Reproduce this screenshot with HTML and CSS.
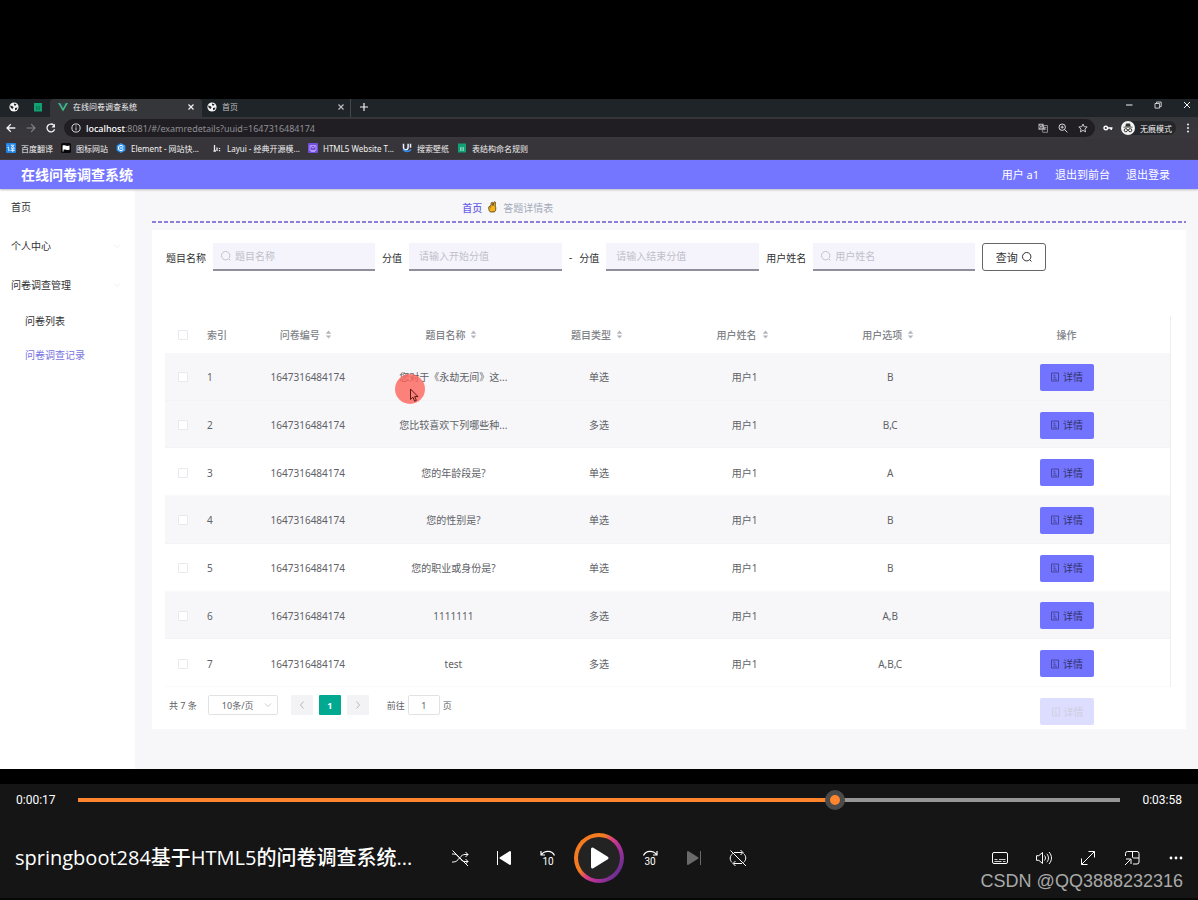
FILE: index.html
```html
<!DOCTYPE html>
<html lang="zh-CN">
<head>
<meta charset="utf-8">
<title>在线问卷调查系统</title>
<link rel="stylesheet" href="styles.css">
</head>
<body>
<svg class="defs" aria-hidden="true">
  <symbol id="globe" viewBox="0 0 10 10"><circle cx="5" cy="5" r="4.6" fill="#f4f4f4"/><path d="M1 3.500 3.800 4.200 4.600 5.600 3.400 7 1.800 5.800ZM5 1.400 7.600 2.200 6.400 3.800 5 3.200ZM6 6 8.600 5.600 7.600 7.800 6 8.200Z" fill="#24272a"/></symbol>
  <symbol id="close" viewBox="0 0 8 8"><path d="M1.500 1.500l5 5M6.500 1.500l-5 5" stroke="currentColor" stroke-width="1.200"/></symbol>
  <symbol id="search" viewBox="0 0 12 12"><circle cx="5.700" cy="5.700" r="4.200" fill="none" stroke="currentColor"/><path d="M8.800 8.800l1.700 1.700" stroke="currentColor"/></symbol>
  <symbol id="sort" viewBox="0 0 8 10"><path d="M4 0.500 7.200 4H.8ZM4 9.500 7.200 6H.8Z" fill="#b4b6bc"/></symbol>
  <symbol id="doc" viewBox="0 0 10 10"><path d="M1.500 1h7v8h-7zM3.300 3.200h2M3.300 5.200h2.500M3.300 7.200h3.500" fill="none" stroke="currentColor" stroke-width=".7"/></symbol>
  <symbol id="chev" viewBox="0 0 8 8"><path d="M1 2.500 4 5.500 7 2.500" fill="none" stroke="currentColor" stroke-width=".9"/></symbol>
</svg>

<section class="video">
  <div class="browser">
    <div class="tabs">
      <div class="pins">
        <svg class="i10"><use href="#globe"/></svg>
        <svg class="i10" viewBox="0 0 10 10"><path d="M1 1h8v8.500H1z" fill="#12a172"/><path d="M3 5h1.600M5.400 5H7M3 7h1.600M5.400 7H7" stroke="#0a5c44"/></svg>
      </div>
      <div class="tab active">
        <svg class="i10" viewBox="0 0 10 10"><path d="M0 1h2.200L5 6 7.800 1H10L5 9.500Z" fill="#41b883"/><path d="M2.200 1h1.600L5 3.200 6.200 1h1.600L5 6Z" fill="#35495e"/></svg>
        <span>在线问卷调查系统</span>
        <button class="bare" aria-label="关闭"><svg class="i8"><use href="#close"/></svg></button>
      </div>
      <div class="tab">
        <svg class="i10"><use href="#globe"/></svg>
        <span>首页</span>
        <button class="bare" aria-label="关闭"><svg class="i8"><use href="#close"/></svg></button>
      </div>
      <button class="bare newtab" aria-label="新标签页"><svg class="i10" viewBox="0 0 10 10"><path d="M5 1v8M1 5h8" stroke="currentColor" stroke-width="1.200"/></svg></button>
      <div class="winctl">
        <button class="bare" aria-label="最小化"><svg class="i8" viewBox="0 0 8 8"><path d="M1 4h6.500" stroke="currentColor"/></svg></button>
        <button class="bare" aria-label="还原"><svg class="i8" viewBox="0 0 8 8"><path d="M1 2.500h4.600v4.600H1zM2.600 2.500V1h4.600v4.600H5.600" fill="none" stroke="currentColor" stroke-width=".8"/></svg></button>
        <button class="bare" aria-label="关闭窗口"><svg class="i8" viewBox="0 0 8 8"><path d="M1 1l6 6M7 1l-6 6" stroke="currentColor"/></svg></button>
      </div>
    </div>
    <div class="toolbar">
      <button class="bare" aria-label="后退"><svg class="i10" viewBox="0 0 10 10"><path d="M9.300 5H1.200M4.800 1.200 1 5l3.800 3.800" fill="none" stroke="currentColor" stroke-width="1.300"/></svg></button>
      <button class="bare dim" aria-label="前进"><svg class="i10" viewBox="0 0 10 10"><path d="M.7 5h8.100M5.200 1.200 9 5 5.200 8.800" fill="none" stroke="currentColor" stroke-width="1.100"/></svg></button>
      <button class="bare" aria-label="刷新"><svg class="i10" viewBox="0 0 10 10"><path d="M8.600 6.200A3.900 3.900 0 1 1 7.800 2.300" fill="none" stroke="currentColor" stroke-width="1.300"/><path d="M9 .8v3.600H5.400z" fill="currentColor"/></svg></button>
      <div class="address">
        <svg class="i10" viewBox="0 0 10 10"><circle cx="5" cy="5" r="4.100" fill="none" stroke="currentColor"/><path d="M5 4.400v3M5 2.400v1.100" stroke="currentColor"/></svg>
        <span class="url"><b>localhost</b>:8081/#/examredetails?uuid=1647316484174</span>
        <svg class="i10" viewBox="0 0 10 10"><path d="M.5.8h5l1.200 6H.5z" fill="#b5b5b8"/><path d="M5.500 2.500h4v6.800H4.800L4.200 7M6 4.400h2.600M7.400 4.400 6.200 7.200M6.400 5l2 2" fill="none" stroke="#b5b5b8" stroke-width=".7"/><path d="M4.200 2.800A1.500 1.500 0 1 0 4.400 4.200H3" fill="none" stroke="#222" stroke-width=".7"/></svg>
        <svg class="i10" viewBox="0 0 10 10"><circle cx="4.200" cy="4.200" r="3.200" fill="none" stroke="currentColor"/><path d="M6.600 6.600l2.800 2.800M2.700 4.200h3M4.200 2.700v3" stroke="currentColor"/></svg>
        <svg class="i10" viewBox="0 0 10 10"><path d="M5 1l1.200 2.700 3 .3-2.300 2 .7 2.900L5 7.400 2.400 8.900 3.100 6 .8 4l3-.3Z" fill="none" stroke="currentColor" stroke-width=".9"/></svg>
      </div>
      <svg class="i10" viewBox="0 0 10 10"><circle cx="2.800" cy="5" r="1.800" fill="none" stroke="#fff" stroke-width="1.400"/><path d="M4.500 5h5M8.200 5v2" stroke="#fff" stroke-width="1.400"/></svg>
      <div class="incognito">
        <svg class="i14" viewBox="0 0 14 14"><circle cx="7" cy="7" r="7" fill="#f4f4f4"/><path d="M4.300 5.600 5 2.600h4l.7 3ZM2.400 5.700h9.200v.9H2.400z" fill="#333"/><circle cx="4.800" cy="9.200" r="1.600" fill="none" stroke="#333"/><circle cx="9.200" cy="9.200" r="1.600" fill="none" stroke="#333"/><path d="M6.300 9h1.400" stroke="#333"/></svg>
        <span>无痕模式</span>
      </div>
      <button class="bare" aria-label="菜单"><svg class="i10" viewBox="0 0 10 10"><g fill="currentColor"><circle cx="5" cy="1.600" r="1"/><circle cx="5" cy="5" r="1"/><circle cx="5" cy="8.400" r="1"/></g></svg></button>
    </div>
    <nav class="bookmarks">
      <a href="#"><svg class="i10" viewBox="0 0 10 10"><rect width="10" height="10" rx="1" fill="#2083e8"/><path d="M1.600 2.300l1 .8M1.300 4.400h1.400v3.400l1-.8M4.600 2.200h3.600L5 5M5.200 2.600 8.600 5M4.800 5.800h3.800M4.400 7.400h4.400M6.700 4.800v4.400" fill="none" stroke="#fff" stroke-width=".8"/></svg>百度翻译</a>
      <a href="#"><svg class="i10" viewBox="0 0 10 10"><rect width="10" height="10" rx="1.500" fill="#080808"/><path d="M1.600 2.600c2-1 3.200 1 6.900 0v4.200c-3 1-4-.8-6 0v1.600h-.9z" fill="#fff"/></svg>图标网站</a>
      <a href="#"><svg class="i10" viewBox="0 0 10 10"><path d="M5 0 9.300 2.500v5L5 10 .7 7.500v-5z" fill="#3398f5"/><path d="M7.400 3.600 5 2.300 2.600 3.600v2.900L5 7.800 7.400 6.500M4 5h3" fill="none" stroke="#fff" stroke-width="1"/></svg>Element - 网站快...</a>
      <a href="#" class="wide"><svg class="i10" viewBox="0 0 10 10"><path d="M2.500 2v6M1.500 8h2.500M5 8V4.500M7.500 5v1M7.500 7v1.300" fill="none" stroke="#ececec" stroke-width="1.300"/></svg>Layui - 经典开源模...</a>
      <a href="#"><svg class="i10" viewBox="0 0 10 10"><rect width="10" height="10" rx="1" fill="#7350dc"/><path d="M2 2.500h6v5H2zM2 2.500l3 2.500 3-2.500M3 8.500h4" fill="none" stroke="#b9a2ff" stroke-width=".9"/></svg>HTML5 Website T...</a>
      <a href="#"><svg class="i10" viewBox="0 0 10 10"><path d="M1.500.8v3.700a2.300 2.300 0 0 0 4.600 0V.8M8.500.8v4" fill="none" stroke="#e8f1ff" stroke-width="1.500"/><path d="M1 6.500c2 2.600 6 2.600 8 0" fill="none" stroke="#3088ef" stroke-width="1.600"/></svg>搜索壁纸</a>
      <a href="#"><svg class="i10" viewBox="0 0 10 10"><path d="M1 .5h8v9H1z" fill="#12a172"/><path d="M3 5h1.600M5.400 5H7M3 7h1.600M5.400 7H7" stroke="#dff"/></svg>表结构命名规则</a>
    </nav>

    <div class="app">
      <header class="apphead">
        <h1>在线问卷调查系统</h1>
        <span>用户 a1</span><a href="#">退出到前台</a><a href="#">退出登录</a>
      </header>
      <div class="body">
        <nav class="side">
          <a href="#">首页</a>
          <a href="#">个人中心<svg class="i8"><use href="#chev"/></svg></a>
          <a href="#">问卷调查管理<svg class="i8"><use href="#chev"/></svg></a>
          <a href="#" class="sub">问卷列表</a>
          <a href="#" class="sub on">问卷调查记录</a>
        </nav>
        <main>
          <div class="crumbs"><a href="#">首页</a>
            <svg class="hand" viewBox="0 0 10 13"><path d="M2.600 12C.8 10.500.5 8.200 1 6.200L3.200 5 3.600 2.200C3.900.9 5.300 1 5.200 2.400L5.500 5 6.500 1.300C7 .2 8.500.5 8.200 2L8 5.500C9.200 7 8.800 11 7 12Z" fill="#f3b51b" stroke="#4c3508" stroke-width=".9"/><path d="M3.200 5.200 2.800 8" stroke="#8b5b08" stroke-width=".7"/></svg>
            <span>答题详情表</span></div>
          <div class="card">
            <form class="filters">
              <label for="q1">题目名称</label>
              <div class="field long"><svg class="i12"><use href="#search"/></svg><input id="q1" placeholder="题目名称"></div>
              <label for="q2">分值</label>
              <div class="field"><input id="q2" placeholder="请输入开始分值"></div>
              <span class="dash">-</span>
              <label for="q3">分值</label>
              <div class="field"><input id="q3" placeholder="请输入结束分值"></div>
              <label for="q4">用户姓名</label>
              <div class="field long"><svg class="i12"><use href="#search"/></svg><input id="q4" placeholder="用户姓名"></div>
              <button type="button" class="query">查询<svg class="i12"><use href="#search"/></svg></button>
            </form>
            <table>
              <colgroup><col class="c-narrow"><col class="c-narrow"><col><col><col><col><col><col class="c-act"></colgroup>
              <thead><tr>
                <th><input type="checkbox" aria-label="全选"></th><th class="idx">索引</th>
                <th><span class="sort">问卷编号<svg><use href="#sort"/></svg></span></th>
                <th><span class="sort">题目名称<svg><use href="#sort"/></svg></span></th>
                <th><span class="sort">题目类型<svg><use href="#sort"/></svg></span></th>
                <th><span class="sort">用户姓名<svg><use href="#sort"/></svg></span></th>
                <th><span class="sort">用户选项<svg><use href="#sort"/></svg></span></th>
                <th>操作</th>
              </tr></thead>
              <tbody>
                <tr class="tint"><td><input type="checkbox" aria-label="选择 1"></td><td class="idx">1</td><td>1647316484174</td><td class="pointed">您对于《永劫无间》这...<svg class="pointer" viewBox="0 0 30 30"><circle cx="15" cy="15" r="15" fill="#ff5a50" fill-opacity=".75"/><path d="M15.500 15v10.500l2.400-2.300 1.700 4 1.800-.8-1.700-3.800h3.300Z" fill="#f88078" stroke="#5a1714"/></svg></td><td>单选</td><td>用户1</td><td>B</td><td><button class="detail"><svg class="i10"><use href="#doc"/></svg>详情</button></td></tr>
                <tr class="tint"><td><input type="checkbox" aria-label="选择 2"></td><td class="idx">2</td><td>1647316484174</td><td>您比较喜欢下列哪些种...</td><td>多选</td><td>用户1</td><td>B,C</td><td><button class="detail"><svg class="i10"><use href="#doc"/></svg>详情</button></td></tr>
                <tr><td><input type="checkbox" aria-label="选择 3"></td><td class="idx">3</td><td>1647316484174</td><td>您的年龄段是?</td><td>单选</td><td>用户1</td><td>A</td><td><button class="detail"><svg class="i10"><use href="#doc"/></svg>详情</button></td></tr>
                <tr class="tint"><td><input type="checkbox" aria-label="选择 4"></td><td class="idx">4</td><td>1647316484174</td><td>您的性别是?</td><td>单选</td><td>用户1</td><td>B</td><td><button class="detail"><svg class="i10"><use href="#doc"/></svg>详情</button></td></tr>
                <tr><td><input type="checkbox" aria-label="选择 5"></td><td class="idx">5</td><td>1647316484174</td><td>您的职业或身份是?</td><td>单选</td><td>用户1</td><td>B</td><td><button class="detail"><svg class="i10"><use href="#doc"/></svg>详情</button></td></tr>
                <tr class="tint"><td><input type="checkbox" aria-label="选择 6"></td><td class="idx">6</td><td>1647316484174</td><td>1111111</td><td>多选</td><td>用户1</td><td>A,B</td><td><button class="detail"><svg class="i10"><use href="#doc"/></svg>详情</button></td></tr>
                <tr><td><input type="checkbox" aria-label="选择 7"></td><td class="idx">7</td><td>1647316484174</td><td>test</td><td>多选</td><td>用户1</td><td>A,B,C</td><td><button class="detail"><svg class="i10"><use href="#doc"/></svg>详情</button></td></tr>
              </tbody>
            </table>
            <div class="foot">
              <div class="pager">
                <span>共 7 条</span>
                <div class="size"><select aria-label="每页条数"><option>10条/页</option></select><svg class="i8"><use href="#chev"/></svg></div>
                <button class="pg" aria-label="上一页"><svg class="i10" viewBox="0 0 10 10"><path d="M6.500 1.500 3.500 5l3 3.500" fill="none" stroke="currentColor"/></svg></button>
                <button class="pg cur">1</button>
                <button class="pg" aria-label="下一页"><svg class="i10" viewBox="0 0 10 10"><path d="M3.500 1.500 6.500 5l-3 3.500" fill="none" stroke="currentColor"/></svg></button>
                <label class="jump">前往<input value="1">页</label>
              </div>
              <div class="fading"><button class="detail" disabled><svg class="i10"><use href="#doc"/></svg>详情</button></div>
            </div>
          </div>
        </main>
      </div>
    </div>
  </div>
</section>

<footer class="player">
  <div class="seek">
    <span>0:00:17</span>
    <input type="range" min="0" max="1000" value="731" aria-label="进度">
    <span>0:03:58</span>
  </div>
  <div class="controls">
    <h2>springboot284基于HTML5的问卷调查系统...</h2>
    <div class="mid">
      <button aria-label="随机播放"><svg viewBox="0 0 18 18"><path d="M1 5h1.500c2.500 0 4 1.500 6 4s3.500 3.500 5.500 3.500h3M1 13h1.500c2.500 0 4-1.500 6-4S12 5.500 14 5.500h3M14.500 3 17 5.500l-2.500 2.500M14.500 10 17 12.500l-2.500 2.500M1.500 1.500l15.500 15.500"/></svg></button>
      <button aria-label="上一个"><svg viewBox="0 0 18 18"><path d="M2.500 2v14"/><path d="M15 3v12L5.500 9Z" fill="#fff" stroke-width="2" stroke-linejoin="round"/></svg></button>
      <button aria-label="后退 10 秒"><svg viewBox="0 0 18 18"><path d="M2 2v4h4M2.300 5.800C5 1.500 13 .5 15.500 6.500" stroke-width="1.200"/><text x="9" y="16">10</text></svg></button>
      <button class="play" aria-label="播放"><svg viewBox="0 0 50 50"><path d="M18.500 16v18L33 25Z" fill="#fff" stroke-width="3" stroke-linejoin="round"/></svg></button>
      <button aria-label="前进 30 秒"><svg viewBox="0 0 18 18"><path d="M16 2v4h-4M15.700 5.800C13 1.500 5 .5 2.500 6.500" stroke-width="1.200"/><text x="9" y="16">30</text></svg></button>
      <button class="off" aria-label="下一个"><svg viewBox="0 0 18 18"><path d="M15.500 2v14"/><path d="M3 3v12L12.500 9Z" fill="currentColor" stroke-width="2" stroke-linejoin="round"/></svg></button>
      <button aria-label="循环"><svg viewBox="0 0 18 18"><path d="M5 3.500h8.500M11.500 1l2.500 2.500L11.500 6M13 14.500H4.500M6.500 12 4 14.500 6.500 17M3.800 4.500C.5 7 .5 11 3 13.500M14.500 4.500c3 2.500 3 6.500 0 9M1.500 1.500l15.500 15.500"/></svg></button>
    </div>
    <div class="right">
      <button aria-label="字幕"><svg viewBox="0 0 18 18"><rect x="1.500" y="3.500" width="15" height="11" rx="1.500"/><path d="M3.500 10.500h3M8 10.500h6.500M3.500 12.500h7M12 12.500h2.500" stroke-width=".8"/></svg></button>
      <button aria-label="音量"><svg viewBox="0 0 18 18"><path d="M1.500 6.700h2.300L7.500 3.500v11L3.800 11.300H1.500ZM9.500 6.500c1.300 1.500 1.300 3.500 0 5M11.800 4.800c2.200 2.500 2.200 6 0 8.400M14 3c3.300 3.700 3.300 8.300 0 12"/></svg></button>
      <button aria-label="全屏"><svg viewBox="0 0 18 18"><path d="M2.500 15.500 15.500 2.500M9.500 2.500h6v6M2.500 9.500v6h6"/></svg></button>
      <button aria-label="迷你视图"><svg viewBox="0 0 18 18"><path d="M2.500 7V4.500a2 2 0 0 1 2-2h9.500a2 2 0 0 1 2 2V13a2 2 0 0 1-2 2h-4M9.500 2.500V8a1 1 0 0 0 1 1H16M2 16l5.500-5.500M3 10h5v5"/></svg></button>
      <button aria-label="更多"><svg viewBox="0 0 18 18"><g fill="#fff" stroke="none"><circle cx="4" cy="9" r="1.400"/><circle cx="9" cy="9" r="1.400"/><circle cx="14" cy="9" r="1.400"/></g></svg></button>
    </div>
  </div>
  <div class="mark">CSDN @QQ3888232316</div>
</footer>
</body>
</html>
```

FILE: styles.css
```css
* { box-sizing: border-box; }
body {
  margin: 0;
  min-height: 100vh;
  display: flex;
  flex-direction: column;
  background: #000;
  font-family: "Noto Sans", "Noto Sans CJK SC", sans-serif;
}
button, input, select { font: inherit; color: inherit; margin: 0; }
button { cursor: pointer; }
a { color: inherit; text-decoration: none; }
svg { flex: none; display: block; }
.defs { position: absolute; width: 0; height: 0; }
.i8 { width: 8px; height: 8px; }
.i10 { width: 10px; height: 10px; }
.i12 { width: 12px; height: 12px; }
.i14 { width: 14px; height: 14px; }
.bare { border: 0; padding: 0; background: none; display: flex; }

.video { flex: 1; display: flex; padding: 99px 0 15px; }
.browser { flex: 1; min-width: 0; display: flex; flex-direction: column; background: #37353a; color: #f1f1f1; font-size: 8px; }

.tabs { display: flex; height: 18px; background: #1f2428; align-items: stretch; line-height: 14px; }
.pins { display: flex; align-items: center; gap: 14px; padding: 0 7px 3px 9px; }
.tab { display: flex; align-items: center; gap: 5px; width: 150px; padding: 0 7px 3px 5px; color: #b9bcc0; }
.tab span { flex: 1; }
.tab.active { background: #35363a; color: #f1f1f1; border-radius: 4px 4px 0 0; width: 152px; padding-left: 8px; }
.newtab { align-items: center; padding: 0 0 3px 8px; margin-left: -2px; border-left: 1px solid #44484c; }
.winctl { margin-left: auto; display: flex; gap: 21px; padding: 2px 7px 0 0; }

.toolbar { display: flex; height: 22px; align-items: center; gap: 10px; padding: 0 5px 0 6px; background: linear-gradient(#35363a, #39373b); }
.dim { color: #85868a; }
.address { flex: 1; display: flex; align-items: center; gap: 10px; height: 18px; border-radius: 9px; background: #211e23; padding: 0 7px; margin: 0 -2px 0 -2px; color: #d7d7d9; }
.url { flex: 1; font-size: 9px; color: #8f8f93; margin-left: -5px; }
.url b { font-weight: 500; color: #fff; }
.incognito { display: flex; align-items: center; gap: 5px; background: #25262a; border-radius: 8px; padding-right: 4px; margin: 0 -3px 0 -2px; }

.bookmarks { display: flex; height: 21px; padding: 0 6px 3px; gap: 8px; align-items: center; white-space: nowrap; }
.bookmarks a { display: flex; gap: 5px; align-items: center; }
.bookmarks .wide { margin-left: 5px; }

.app { flex: 1; display: flex; flex-direction: column; background: #f7f7fa; color: #303133; font-size: 10px; }
.apphead { display: flex; align-items: center; gap: 16px; height: 29px; padding: 0 28px 2px 21px; background: #7476ff; color: #fff; font-size: 11px; box-shadow: 0 1px 2px #bbb; position: relative; }
.apphead h1 { margin: 0 auto 0 0; font-size: 14px; font-weight: 700; }
.body { flex: 1; display: flex; }
.side { width: 135px; background: #fff; display: flex; flex-direction: column; }
.side a { height: 39px; padding: 0 14px 4px 11px; display: flex; align-items: center; justify-content: space-between; }
.side a svg { color: #ececee; }
.side .sub { height: 34px; padding: 0 0 5px 25px; }
.side .on { color: #7873df; }

main { flex: 1; min-width: 0; padding: 0 12px 40px 17px; }
.crumbs { display: flex; align-items: center; gap: 6px; height: 34px; padding: 2px 0 0 30%; color: #a2aab8; background: repeating-linear-gradient(90deg, #8b7fd9 0 4px, transparent 4px 6px) 0 100% / 100% 2px no-repeat; }
.crumbs a { color: #6961e6; font-weight: 500; }
.hand { width: 9px; height: 12px; }

.card { margin-top: 7px; padding: 13px 15px 4px 13px; background: #fff; }
.filters { display: flex; align-items: center; gap: 7px; margin-bottom: 45px; padding-left: 1px; }
.filters label { flex: none; white-space: nowrap; }
.field { flex: 0 1 153px; min-width: 60px; display: flex; align-items: center; height: 28px; padding-left: 10px; background: #f5f4fc; border-bottom: 2px solid #918f9b; color: #c3c2cb; }
.field.long { flex-basis: 162px; padding-left: 7px; gap: 3px; }
.field input { flex: 1; min-width: 0; border: 0; padding: 0; background: none; color: #333; outline: 0; }
.field input::placeholder { color: #c0bfca; opacity: 1; }
.query { flex: none; width: 64px; height: 28px; display: flex; align-items: center; justify-content: center; gap: 3px; padding: 0; border: 1px solid #66666a; border-radius: 3px; background: #fff; font-size: 11px; }

table { width: 100%; height: 371px; table-layout: fixed; border-collapse: separate; border-spacing: 0; border-right: 1px solid #eeeef1; color: #606266; }
.c-narrow { width: 35px; }
.c-act { width: 207px; }
thead tr { height: 37px; }
th, td { padding: 0; text-align: center; vertical-align: middle; font-weight: 400; line-height: 14px; }
td { padding-top: 2px; }
th { color: #808287; font-weight: 500; }
.idx { text-align: left; padding-left: 7px; }
.sort { display: inline-flex; align-items: center; gap: 5px; padding-right: 4px; }
.sort svg { width: 7px; height: 9px; }
td { border-bottom: 1px solid #fafafc; }
.tint td { background: #f7f7fa; border-color: #f3f3f6; }
input[type="checkbox"] { appearance: none; display: block; width: 10px; height: 10px; margin: 0 auto; border: 1px solid #e9e9ed; border-radius: 1px; background: #fff; }
.pointed { position: relative; }
.pointer { position: absolute; left: 14px; top: 21px; width: 30px; height: 30px; }
.detail { display: flex; align-items: center; justify-content: center; gap: 3px; width: 54px; height: 27px; margin: 0 auto; padding: 0; border: 0; border-radius: 2px; background: #7273ff; color: #34346b; }

.foot { display: flex; justify-content: space-between; align-items: flex-start; padding-top: 8px; }
.pager { display: flex; align-items: center; gap: 6px; padding-left: 4px; font-size: 9px; color: #606266; }
.size { position: relative; margin: 0 7px 0 5px; }
.size select { appearance: none; width: 70px; height: 20px; padding: 0 0 0 13px; border: 1px solid #e2e2e6; border-radius: 2px; background: #fff; }
.size svg { position: absolute; right: 6px; top: 6px; color: #c0c4cc; }
.pg { display: flex; align-items: center; justify-content: center; width: 22px; height: 20px; padding: 0; border: 0; border-radius: 1px; background: #f3f3f5; color: #b6b8be; }
.pg.cur { background: #00a98f; color: #fff; font-weight: 700; }
.jump { display: flex; align-items: center; gap: 3px; margin-left: 12px; }
.jump input { width: 32px; height: 20px; border: 1px solid #e2e2e6; border-radius: 2px; text-align: center; padding: 0; }
.fading { width: 208px; padding-top: 3px; opacity: .24; }

.player { position: relative; height: 116px; background: #151515; border-bottom: 2px solid #080808; color: #fff; font-family: "Open Sans", "Noto Sans CJK SC", sans-serif; }
.seek { display: flex; align-items: center; justify-content: space-between; gap: 22px; height: 32px; padding: 0 16px; font-family: Roboto, sans-serif; font-size: 12px; }
.seek input { appearance: none; flex: 1; min-width: 0; height: 20px; background: linear-gradient(90deg, #ff852f 73%, #969696 73%) center / 100% 4px no-repeat; }
.seek input::-webkit-slider-thumb { appearance: none; width: 20px; height: 20px; border-radius: 50%; border: 5px solid #4a4a4a; background: #ff852f; }
.controls { display: grid; grid-template-columns: minmax(0, 1fr) auto minmax(0, 1fr); align-items: center; height: 50px; margin-top: 17px; }
.controls h2 { margin: 0; padding: 0 0 3px 15px; font-size: 20px; font-weight: 500; white-space: nowrap; }
.mid, .right { display: flex; align-items: center; }
.right { justify-content: flex-end; }
.controls button { display: flex; align-items: center; justify-content: center; width: 44px; height: 44px; border: 0; padding: 0; background: none; }
.controls button svg { width: 18px; height: 18px; fill: none; stroke: currentColor; stroke-width: 1; }
.controls text { fill: #fff; stroke: none; font: 400 10px Roboto, sans-serif; text-anchor: middle; }
.controls .off { color: #6a6a6a; }
.controls .play { width: 50px; height: 50px; margin: 0 4px; border: 4px solid transparent; border-radius: 50%; background: linear-gradient(#232323, #232323) padding-box, linear-gradient(125deg, #f47b20 38%, #d9407f 50%, #b5309a 62%, #6b2f91 85%) border-box; }
.controls .play svg { width: 50px; height: 50px; }
.mark { position: absolute; right: 15px; bottom: 6px; font: 18px/22px "Liberation Sans", sans-serif; color: #a9a9a9; }
```
